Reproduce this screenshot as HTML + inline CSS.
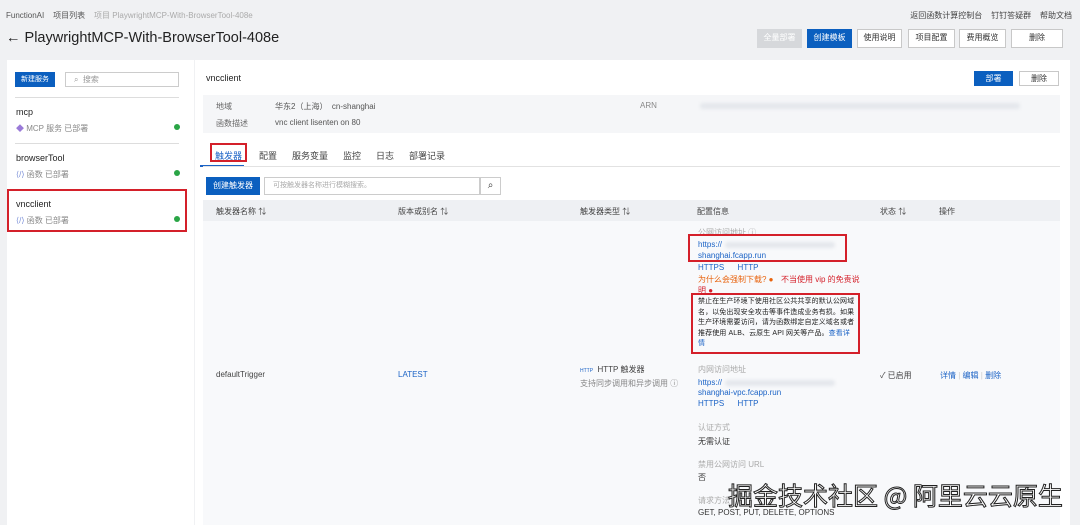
<!DOCTYPE html>
<html><head><meta charset="utf-8"><style>
*{margin:0;padding:0;box-sizing:border-box}
body{width:1080px;height:525px;overflow:hidden;background:#f0f1f3;font-family:"Liberation Sans","Noto Sans CJK SC",sans-serif;font-size:8px;color:#333;position:relative}
.a{position:absolute;white-space:nowrap}
.btn{position:absolute;height:18px;border:1px solid #c8c8c8;background:#fff;font-size:8px;text-align:center;line-height:16px;color:#333}
.pri{background:#0b5fbf;color:#fff;border-color:#0b5fbf}
.blue{color:#1b63c6}
.gray{color:#888}
.dot{position:absolute;width:6px;height:6px;border-radius:50%;background:#2aa546}
.red{position:absolute;border:2px solid #d4202a}
.blur{position:absolute;height:6px;background:#e4e7ec;border-radius:3px;filter:blur(1.5px)}
</style></head><body>
<div class="a gray" style="left:6px;top:10px;color:#555">FunctionAI&nbsp;&nbsp;&nbsp;&nbsp;项目列表&nbsp;&nbsp;&nbsp;&nbsp;<span style="color:#aaa">项目 PlaywrightMCP-With-BrowserTool-408e</span></div>
<div class="a" style="right:8px;top:10px;color:#444">返回函数计算控制台&nbsp;&nbsp;&nbsp;&nbsp;钉钉答疑群&nbsp;&nbsp;&nbsp;&nbsp;帮助文档</div>
<div class="a" style="left:6px;top:30px;font-size:14.5px;color:#222">← PlaywrightMCP-With-BrowserTool-408e</div>
<div class="btn" style="left:757px;top:29px;width:45px;height:19px;background:#d6d8db;border-color:#d6d8db;color:#fff">全量部署</div>
<div class="btn pri" style="left:807px;top:29px;width:45px;height:19px">创建模板</div>
<div class="btn" style="left:857px;top:29px;width:45px;height:19px">使用说明</div>
<div class="btn" style="left:908px;top:29px;width:47px;height:19px">项目配置</div>
<div class="btn" style="left:959px;top:29px;width:47px;height:19px">费用概览</div>
<div class="btn" style="left:1011px;top:29px;width:52px;height:19px">删除</div>

<div class="a" style="left:7px;top:60px;width:187px;height:465px;background:#fff"></div>
<div class="btn pri" style="left:15px;top:72px;width:40px;height:15px;line-height:13px;font-size:7px">新建服务</div>
<div class="a" style="left:65px;top:72px;width:114px;height:15px;border:1px solid #ccc;padding-left:8px;line-height:13px;color:#999">⌕&nbsp;&nbsp;搜索</div>
<div class="a" style="left:15px;top:97px;width:164px;border-top:1px solid #ddd"></div>
<div class="a" style="left:16px;top:107px;font-size:9px;color:#222">mcp</div>
<div class="a gray" style="left:16px;top:123px"><span style="color:#9a7ad8">◆</span> MCP 服务 已部署</div>
<div class="dot" style="left:174px;top:124px"></div>
<div class="a" style="left:15px;top:143px;width:164px;border-top:1px solid #ddd"></div>
<div class="a" style="left:16px;top:153px;font-size:9px;color:#222">browserTool</div>
<div class="a gray" style="left:16px;top:169px"><span style="color:#7a8fd8">⟨/⟩</span> 函数 已部署</div>
<div class="dot" style="left:174px;top:170px"></div>
<div class="red" style="left:7px;top:189px;width:180px;height:43px"></div>
<div class="a" style="left:16px;top:199px;font-size:9px;color:#222">vncclient</div>
<div class="a gray" style="left:16px;top:215px"><span style="color:#7a8fd8">⟨/⟩</span> 函数 已部署</div>
<div class="dot" style="left:174px;top:216px"></div>

<div class="a" style="left:195px;top:60px;width:875px;height:465px;background:#fff"></div>
<div class="a" style="left:206px;top:73px;font-size:9px;color:#222">vncclient</div>
<div class="btn pri" style="left:974px;top:71px;width:39px;height:15px;line-height:13px">部署</div>
<div class="btn" style="left:1019px;top:71px;width:40px;height:15px;line-height:13px">删除</div>
<div class="a" style="left:203px;top:95px;width:857px;height:38px;background:#f5f6f8"></div>
<div class="a gray" style="left:216px;top:101px;color:#666">地域</div>
<div class="a" style="left:275px;top:101px;color:#555">华东2（上海）&nbsp;&nbsp;cn-shanghai</div>
<div class="a gray" style="left:216px;top:118px;color:#666">函数描述</div>
<div class="a" style="left:275px;top:118px;color:#555">vnc client lisenten on 80</div>
<div class="a gray" style="left:640px;top:101px">ARN</div>
<div class="blur" style="left:700px;top:103px;width:320px"></div>

<div class="a" style="left:215px;top:149px;font-size:9px;color:#1b63c6">触发器</div>
<div class="red" style="left:210px;top:143px;width:37px;height:19px"></div>
<div class="a" style="left:200px;top:165px;width:44px;border-top:2px solid #1b63c6"></div>
<div class="a" style="left:203px;top:166px;width:857px;border-top:1px solid #e2e2e2"></div>
<div class="a" style="left:259px;top:149px;font-size:9px;color:#444">配置&nbsp;&nbsp;&nbsp;&nbsp;&nbsp;&nbsp;服务变量&nbsp;&nbsp;&nbsp;&nbsp;&nbsp;&nbsp;监控&nbsp;&nbsp;&nbsp;&nbsp;&nbsp;&nbsp;日志&nbsp;&nbsp;&nbsp;&nbsp;&nbsp;&nbsp;部署记录</div>

<div class="btn pri" style="left:206px;top:177px;width:54px;height:18px">创建触发器</div>
<div class="a" style="left:264px;top:177px;width:216px;height:18px;border:1px solid #ccc;padding-left:8px;line-height:16px;color:#aaa;font-size:7px">可按触发器名称进行模糊搜索。</div>
<div class="a" style="left:480px;top:177px;width:21px;height:18px;border:1px solid #ccc;text-align:center;line-height:15px;font-size:10px">⌕</div>

<div class="a" style="left:203px;top:200px;width:857px;height:21px;background:#eef0f3"></div>
<div class="a" style="left:216px;top:206px;color:#444">触发器名称 ⇅</div>
<div class="a" style="left:398px;top:206px;color:#444">版本或别名 ⇅</div>
<div class="a" style="left:580px;top:206px;color:#444">触发器类型 ⇅</div>
<div class="a" style="left:697px;top:206px;color:#444">配置信息</div>
<div class="a" style="left:880px;top:206px;color:#444">状态 ⇅</div>
<div class="a" style="left:939px;top:206px;color:#444">操作</div>
<div class="a" style="left:203px;top:221px;width:857px;height:304px;background:#f8f9fb"></div>
<div class="a" style="left:1070px;top:60px;width:10px;height:465px;background:#f0f1f3"></div>

<div class="a" style="left:216px;top:370px;color:#444">defaultTrigger</div>
<div class="a blue" style="left:398px;top:370px">LATEST</div>
<div class="a" style="left:580px;top:364px;color:#444"><span style="font-size:5px;color:#1b63c6">HTTP</span>&nbsp;&nbsp;HTTP 触发器</div>
<div class="a gray" style="left:580px;top:378px">支持同步调用和异步调用 ⓘ</div>

<div class="a" style="left:698px;top:227px;color:#aaa">公网访问地址 ⓘ</div>
<div class="a blue" style="left:698px;top:240px">https://</div><div class="blur" style="left:725px;top:242px;width:110px"></div>
<div class="a blue" style="left:698px;top:251px">shanghai.fcapp.run</div>
<div class="red" style="left:688px;top:234px;width:159px;height:28px"></div>
<div class="a blue" style="left:698px;top:263px">HTTPS&nbsp;&nbsp;&nbsp;&nbsp;&nbsp;&nbsp;HTTP</div>
<div class="a" style="left:698px;top:274px;color:#e8620c">为什么会强制下载? <span style="color:#e8620c">●</span></div>
<div class="a" style="left:781px;top:274px;color:#d4202a">不当使用 vip 的免责说</div>
<div class="a" style="left:698px;top:285px;color:#d4202a">明 ●</div>
<div class="red" style="left:691px;top:293px;width:169px;height:61px"></div>
<div class="a" style="left:698px;top:297px;color:#222;font-size:7px;letter-spacing:0.1px;line-height:10.6px;white-space:normal;width:158px">禁止在生产环境下使用社区公共共享的默认公网域名，以免出现安全攻击等事件造成业务有损。如果生产环境需要访问，请为函数绑定自定义域名或者推荐使用 ALB、云原生 API 网关等产品。<span class="blue">查看详情</span></div>
<div class="a" style="left:698px;top:364px;color:#aaa">内网访问地址</div>
<div class="a blue" style="left:698px;top:378px">https://</div><div class="blur" style="left:725px;top:380px;width:110px"></div>
<div class="a blue" style="left:698px;top:388px">shanghai-vpc.fcapp.run</div>
<div class="a blue" style="left:698px;top:399px">HTTPS&nbsp;&nbsp;&nbsp;&nbsp;&nbsp;&nbsp;HTTP</div>
<div class="a" style="left:698px;top:422px;color:#aaa">认证方式</div>
<div class="a" style="left:698px;top:436px;color:#333">无需认证</div>
<div class="a" style="left:698px;top:459px;color:#aaa">禁用公网访问 URL</div>
<div class="a" style="left:698px;top:472px;color:#333">否</div>
<div class="a" style="left:698px;top:495px;color:#aaa">请求方法</div>
<div class="a" style="left:698px;top:508px;color:#333">GET, POST, PUT, DELETE, OPTIONS</div>
<div class="a" style="left:880px;top:370px;color:#444">✓ 已启用</div>
<div class="a blue" style="left:940px;top:370px">详情 <span style="color:#ccc">|</span> 编辑 <span style="color:#ccc">|</span> 删除</div>

<div class="a" style="left:728px;top:477px;font-size:25px;color:#fff;-webkit-text-stroke:1px #222;font-family:'Noto Sans CJK SC',sans-serif">掘金技术社区 @ 阿里云云原生</div>
</body></html>
